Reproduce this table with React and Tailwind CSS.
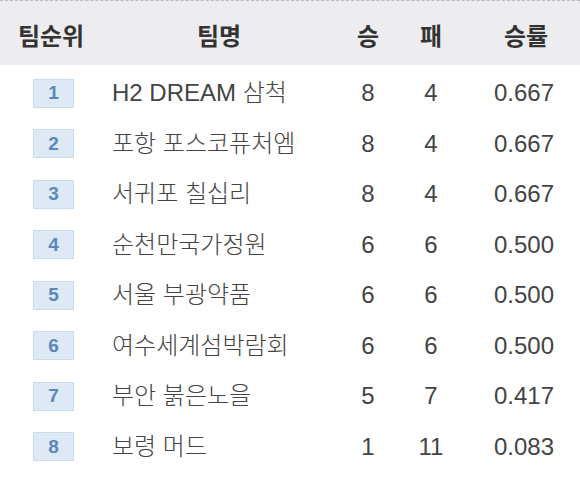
import React from "react";

const teams = [
  { rank: 1, name: "H2 DREAM 삼척", win: 8, loss: 4, rate: "0.667" },
  { rank: 2, name: "포항 포스코퓨처엠", win: 8, loss: 4, rate: "0.667" },
  { rank: 3, name: "서귀포 칠십리", win: 8, loss: 4, rate: "0.667" },
  { rank: 4, name: "순천만국가정원", win: 6, loss: 6, rate: "0.500" },
  { rank: 5, name: "서울 부광약품", win: 6, loss: 6, rate: "0.500" },
  { rank: 6, name: "여수세계섬박람회", win: 6, loss: 6, rate: "0.500" },
  { rank: 7, name: "부안 붉은노을", win: 5, loss: 7, rate: "0.417" },
  { rank: 8, name: "보령 머드", win: 1, loss: 11, rate: "0.083" },
];

const font = {
  fontFamily: '"Liberation Sans", "Noto Sans CJK KR", sans-serif',
};

export default function App() {
  return (
    <div className="w-[580px] h-[479px] bg-white overflow-hidden" style={font}>
      {/* header */}
      <div className="grid grid-cols-[102px_234px_64px_62px_118px] h-[65px] bg-[#ededf0] border-t border-dashed border-[#b9b9bd] text-[24px] font-bold text-[#333] items-center pt-[7px]">
        <div className="text-center">팀순위</div>
        <div className="text-center">팀명</div>
        <div className="text-center">승</div>
        <div className="text-center">패</div>
        <div className="text-center pl-[10px]">승률</div>
      </div>

      <div className="pt-[3px]">
        {teams.map((t) => (
          <div
            key={t.rank}
            className="grid grid-cols-[102px_234px_64px_62px_118px] h-[50.5px] items-center text-[24px] font-light text-[#444]"
          >
            <div className="pl-[33px]">
              <span className="flex items-center justify-center w-[41px] h-[29px] bg-[#dde9f5] border border-[#c9dcee] text-[19px] font-bold text-[#5a88b8]">
                {t.rank}
              </span>
            </div>
            <div className="pl-[10px] whitespace-nowrap">{t.name}</div>
            <div className="text-center">{t.win}</div>
            <div className="text-center">{t.loss}</div>
            <div className="text-center pl-[6px]">{t.rate}</div>
          </div>
        ))}
      </div>
    </div>
  );
}
